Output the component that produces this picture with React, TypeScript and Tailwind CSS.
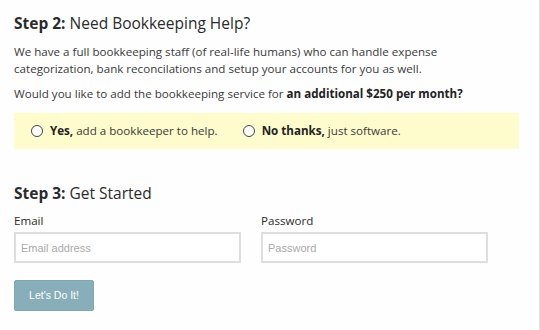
import { useState } from 'react';

export default function App() {
  const [choice, setChoice] = useState<string | null>(null);

  return (
    <div className="w-[540px] h-[330px] bg-[#fefefe] border-r border-[#d5e6f6] text-[#3a3a3a] font-['Open_Sans',sans-serif] overflow-hidden">
      <div className="pl-[14px] pr-[20px] pt-[11px]">
        {/* Step 2 */}
        <h2 className="text-[15.5px] leading-[24px] text-[#2b2b2b]">
          <span className="font-bold">Step 2:</span> Need Bookkeeping Help?
        </h2>
        <p className="mt-[8px] text-[11.6px] leading-[17px]">
          We have a full bookkeeping staff (of real-life humans) who can handle expense
          <br />
          categorization, bank reconcilations and setup your accounts for you as well.
        </p>
        <p className="mt-[8px] text-[11.6px] leading-[17px]">
          Would you like to add the bookkeeping service for <span className="font-bold text-[#222]">an additional $250 per month?</span>
        </p>

        <div className="mt-[11px] h-[36px] w-[505px] bg-[#fefccc] flex items-center pl-[17px] gap-[25px] text-[11.6px]">
          <Radio label="Yes," rest="add a bookkeeper to help." checked={choice === 'yes'} onClick={() => setChoice('yes')} />
          <Radio label="No thanks," rest="just software." checked={choice === 'no'} onClick={() => setChoice('no')} />
        </div>

        {/* Step 3 */}
        <h2 className="mt-[32px] text-[15.5px] leading-[24px] text-[#2b2b2b]">
          <span className="font-bold">Step 3:</span> Get Started
        </h2>
        <div className="mt-[8px] flex gap-[20px]">
          <Field label="Email" placeholder="Email address" type="email" />
          <Field label="Password" placeholder="Password" type="password" />
        </div>
        <button className="mt-[17px] w-[80px] h-[31px] rounded-[2px] bg-[#87aeb9] border border-[#80a6b1] text-white text-[10.5px] font-['Liberation_Sans',sans-serif]">
          Let's Do It!
        </button>
      </div>
    </div>
  );
}

function Radio({ label, rest, checked, onClick }: any) {
  return (
    <label className="flex items-center gap-[7px] cursor-pointer" onClick={onClick}>
      <span className="w-[12px] h-[12px] rounded-full border-[1.5px] border-[#444] bg-white flex items-center justify-center">
        {checked && <span className="w-[5px] h-[5px] rounded-full bg-[#444]" />}
      </span>
      <span>
        <span className="font-bold text-[#222]">{label}</span> {rest}
      </span>
    </label>
  );
}

function Field({ label, placeholder, type }: any) {
  return (
    <div className="flex flex-col">
      <label className="text-[11.6px] leading-[16px] text-[#2b2b2b]">{label}</label>
      <input
        type={type}
        placeholder={placeholder}
        className="mt-[3px] w-[227px] h-[31px] border-2 border-[#dedede] bg-white pl-[5px] text-[11px] font-['Liberation_Sans',sans-serif] placeholder:text-[#a9a9a9] outline-none"
      />
    </div>
  );
}
